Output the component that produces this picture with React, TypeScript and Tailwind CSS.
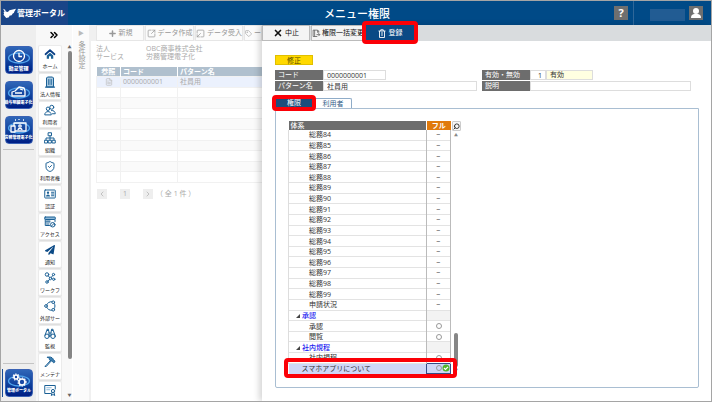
import type { ReactNode } from "react";
import {
  ChevronLeft,
  ChevronRight,
  ChevronsRight,
  FileText,
  Plus,
  Search,
  ShieldCheck,
  SquareArrowOutUpRight,
  SquareArrowOutDownLeft,
  Tag,
  X,
} from "lucide-react";
import { FaPaperPlane } from "react-icons/fa";

function Svg({ children }: { children: ReactNode }) {
  return (
    <svg viewBox="0 0 24 24" className="size-3" fill="none" stroke="currentColor" strokeWidth="2" strokeLinecap="round" strokeLinejoin="round">
      {children}
    </svg>
  );
}

const HomeIcon = (
  <Svg>
    <path d="M3 12.500 12 4.500l9 8" stroke="#0b3f86" strokeWidth="3.400" />
    <path d="M5.500 15 12 9.500l6.500 5.500V21.500H14v-5h-4v5H5.500z" fill="currentColor" stroke="none" />
  </Svg>
);

const BuildingIcon = (
  <Svg>
    <path d="M5 21V4l2-2h10l2 2v17z" fill="#a9c9e0" />
    <path d="M9 7v10M12 7v10M15 7v10" strokeWidth="1.400" />
    <path d="M3 22h18" strokeWidth="2.500" />
  </Svg>
);

const UsersIcon = (
  <Svg>
    <circle cx="15.500" cy="6.500" r="4" />
    <circle cx="8" cy="9.500" r="3.500" fill="white" />
    <path d="M1.500 21c0-8 13-8 13 0zM15 13c4-.500 7.500 2 7.500 6.500H17" />
  </Svg>
);

const OrgIcon = (
  <Svg>
    <rect x="9" y="1.500" width="6" height="6" />
    <rect x="1.500" y="16.500" width="5.500" height="5.500" />
    <rect x="9.200" y="16.500" width="5.500" height="5.500" />
    <rect x="17" y="16.500" width="5.500" height="5.500" />
    <path d="M12 8v8M4 16v-4h16v4" />
  </Svg>
);

const CardIcon = (
  <Svg>
    <rect x="1.500" y="4" width="21" height="16" rx="1" />
    <circle cx="8" cy="9.500" r="2.300" fill="currentColor" stroke="none" />
    <path d="M4 17c0-5.500 8-5.500 8 0z" fill="currentColor" stroke="none" />
    <path d="M15 8.500h4.500M15 12h4.500M15 15.500h4.500" />
  </Svg>
);

const AccessIcon = (
  <Svg>
    <rect x="1.500" y="2" width="21" height="5" rx="1" fill="#8db8d8" />
    <path d="M12 12H2.500V8M22 8v3M11 19H2.500v-6" />
    <path d="M5 10h7M5 16h5" />
    <circle cx="17.500" cy="17.500" r="4.500" />
    <path d="m14.500 20.500 6-6" />
  </Svg>
);

const WorkflowIcon = (
  <Svg>
    <circle cx="6" cy="5" r="3.500" />
    <circle cx="19" cy="5" r="2.300" />
    <circle cx="13" cy="13" r="2.500" />
    <circle cx="6" cy="20" r="2.500" />
    <circle cx="19.500" cy="14.500" r="2.300" />
    <path d="m8.500 7.500 2.500 3.500M14.500 11l3-4M11.500 15l-4 3" />
  </Svg>
);

const ExternalIcon = (
  <Svg>
    <circle cx="4" cy="12" r="2.700" />
    <circle cx="18.500" cy="4.500" r="2.700" />
    <circle cx="18.500" cy="19.500" r="2.700" />
    <path d="M5.500 9.500C7 5.500 11 3 15.800 3.500M5.500 14.500c1.500 4 5.500 6.500 10.300 6M20.500 7c2 3 2 7 0 10" />
  </Svg>
);

const BinocularsIcon = (
  <Svg>
    <circle cx="6" cy="16.500" r="4.500" />
    <circle cx="18" cy="16.500" r="4.500" />
    <path d="M2 14.500 5.500 5h4l1 11M22 14.500 18.500 5h-4l-1 11M6 5V2.500h3V5M15 5V2.500h3V5M10.500 10h3" />
  </Svg>
);

const HammerIcon = (
  <Svg>
    <path d="M7 2.500c5-1.500 9 0 11 3l.500 2 2.500 1.500 1 2.500-2.500 2-2.500-2-1.500-2-2 .500-2.500-2.500C11.500 5 10 3.500 7 2.500z" fill="#3f7fb0" />
    <path d="M13 9 2.500 20.500M14 10.500 4 21.500l-1.500-1" />
  </Svg>
);

const CertificateIcon = (
  <Svg>
    <path d="M13 19H1.500V3h21v7" />
    <path d="M5.500 7.500h9M5.500 11.500h6" stroke="#8db8d8" />
    <circle cx="18" cy="14" r="3.200" />
    <path d="m16 17-1.500 6 3.500-2 3.500 2-1.500-6" />
  </Svg>
);

const menu: { label: string; icon: ReactNode }[] = [
  { label: "ホーム", icon: HomeIcon },
  { label: "法人情報", icon: BuildingIcon },
  { label: "利用者", icon: UsersIcon },
  { label: "組織", icon: OrgIcon },
  { label: "利用者権", icon: <ShieldCheck className="size-[13px]" /> },
  { label: "認証", icon: CardIcon },
  { label: "アクセス", icon: AccessIcon },
  { label: "通知", icon: <FaPaperPlane className="size-[10px] text-[#0b4a86]" /> },
  { label: "ワークフ", icon: WorkflowIcon },
  { label: "外部サー", icon: ExternalIcon },
  { label: "監視", icon: BinocularsIcon },
  { label: "メンテナ", icon: HammerIcon },
  { label: "", icon: CertificateIcon },
];

function AppTile({ label, small, children }: { label: string; small?: boolean; children: ReactNode }) {
  return (
    <button className="flex size-7 shrink-0 flex-col items-center justify-end rounded-[4px] border border-[#3a62b4] bg-linear-to-b from-[#2f66b8] to-[#001d84] pb-[2px] text-white">
      <svg viewBox="0 0 26 16" className="h-4 w-[26px]" fill="none" stroke="white" strokeWidth="1.300" strokeLinejoin="round">
        <ellipse cx="13" cy="9" rx="10.500" ry="5" stroke="#4fa3ec" />
        {children}
      </svg>
      <span className={small ? "text-[4px] leading-[6px] font-black whitespace-nowrap" : "text-[5px] leading-[6px] font-black whitespace-nowrap"}>{label}</span>
    </button>
  );
}

function Cog({ cx, cy, r }: { cx: number; cy: number; r: number }) {
  return (
    <>
      <circle cx={cx} cy={cy} r={r + 1} strokeWidth="1.200" strokeDasharray="1.300 1.300" />
      <circle cx={cx} cy={cy} r={r} strokeWidth="1.600" fill="#1b4aa5" />
    </>
  );
}

type Row = { name: string; value?: string; group?: boolean };
const rows: Row[] = [
  ...Array.from({ length: 16 }, (_, i) => ({ name: `総務${84 + i}`, value: "−" })),
  { name: "申請状況", value: "−" },
  { name: "承認", group: true },
  { name: "承認", value: "○" },
  { name: "閲覧", value: "○" },
  { name: "社内規程", group: true },
  { name: "社内規程", value: "○" },
];

function Highlight({ className }: { className: string }) {
  return <span className={`pointer-events-none absolute z-20 rounded-[4px] border-4 border-[#fb0007] ${className}`} />;
}

function Mark({ value }: { value?: string }) {
  if (value === "○") return <span className="mx-auto block size-[6px] rounded-full border border-[#999]" />;
  return <span className="block text-center font-semibold text-[#555]">{value}</span>;
}

const labelCell = "bg-[#6d6d6d] pl-[3px] text-white w-12 shrink-0";
const field = "h-[10px] border border-[#ddd] bg-white px-[3px] text-[7px] leading-[8px] outline-none";
const dimButton = "flex items-center justify-center gap-[2px] border border-[#e6e6e6] bg-[#fbfbfb] whitespace-nowrap";

export default function App() {
  return (
    <div className="flex h-screen flex-col overflow-hidden border border-[#a5a5a5] bg-white font-['Open_Sans','Noto_Sans_CJK_JP',sans-serif] text-[7px] leading-[10px] text-[#333]">
      <header className="flex h-6 shrink-0 items-stretch bg-[#004a87] text-white">
        <div className="flex w-[67px] items-center gap-px bg-[#1a4588] pl-[2px] text-[8px] font-bold whitespace-nowrap">
          <svg viewBox="0 0 24 18" className="h-[10px] w-[13px]" fill="white">
            <path d="M0 1 4 3l1 3 4 1 3-3 12-3-2 4-1 1-1 3-2 1-2 3-4 1-1 3-5 1-2-2-3-4 1-2-1-3 2-1z" />
          </svg>
          管理ポータル
        </div>
        <h1 className="flex-1 pl-[168px] text-center text-[11px] leading-[25px] font-medium">メニュー権限</h1>
        <div className="flex w-[233px] items-center justify-end">
          <button aria-label="ヘルプ" className="size-[14px] bg-[#6f6f6f] text-[11px] leading-[14px] font-bold">?</button>
          <span className="ml-[5px] w-px self-stretch bg-[#2f6799]" />
          <span className="mt-1 ml-4 h-3 w-[35px] bg-[#225c93]" />
          <button aria-label="ユーザー" className="mr-2 ml-1 size-[14px] bg-[#6f6f6f]">
            <svg viewBox="0 0 14 14" className="size-[14px]" fill="white">
              <circle cx="7" cy="5" r="3" />
              <path d="M2 12c0-3 1.500-4 3.500-4h3c2 0 3.500 1 3.500 4z" />
            </svg>
          </button>
        </div>
      </header>

      <div className="flex min-h-0 flex-1">
        <nav aria-label="サービス" className="flex w-[35px] shrink-0 flex-col items-center gap-[7px] bg-[#eeeeee] pt-[21px] pb-1">
          <AppTile label="勤怠管理">
            <circle cx="13" cy="7" r="5.500" />
            <path d="M13 4v3.500h3" />
          </AppTile>
          <AppTile label="給与明細電子化" small>
            <path d="M6 12V8l3-1 4-4 5 1 1 3v5zM9 9h7M14 5l3 1" />
          </AppTile>
          <AppTile label="労務管理電子化" small>
            <rect x="8" y="4" width="12" height="8" />
            <rect x="5" y="7" width="4" height="6" fill="#1b4aa5" />
            <circle cx="14" cy="7" r="1.200" />
            <path d="M12 11c0-2 4-2 4 0M9 1h1M13 0v1M17 1h1" />
          </AppTile>
          <hr className="-mt-[2px] w-[31px] border-[#c4c4c4]" />
          <hr className="mt-auto w-[31px] border-[#c4c4c4]" />
          <div className="-mt-[2px] flex w-full gap-[2px] pl-px">
            <span className="w-px bg-[#164a94]" />
            <AppTile label="管理ポータル" small>
              <Cog cx={10} cy={5} r={2} />
              <Cog cx={16} cy={10} r={3} />
            </AppTile>
          </div>
        </nav>

        <nav aria-label="メニュー" className="flex w-9 shrink-0 flex-col bg-[#f8f8f8]">
          <button aria-label="メニューを開く" className="flex h-5 shrink-0 items-center justify-center text-black">
            <ChevronsRight className="size-3" strokeWidth={3} />
          </button>
          <div className="flex min-h-0 flex-1 justify-between pl-[2px]">
            <ul className="flex flex-col gap-px overflow-hidden">
              {menu.map((m, i) => (
                <li key={i}>
                  <button aria-label={m.label || "証明書"} className="flex h-[27px] w-6 flex-col items-center rounded-[2px] border border-[#ebebeb] bg-white pt-[2px] text-[#1b6095] shadow-sm">
                    <span className="flex size-3 items-center justify-center">{m.icon}</span>
                    <span className="mt-[2px] text-[5px] leading-[8px] whitespace-nowrap text-[#222]">{m.label}</span>
                  </button>
                </li>
              ))}
            </ul>
            <div className="flex w-[5px] flex-col items-center pb-[2px] text-[4px] leading-[6px] text-[#666]">
              <span>▲</span>
              <span className="w-1 flex-1 rounded-full bg-[#858585]" />
              <span className="mt-[34px]">▼</span>
            </div>
          </div>
        </nav>

        <aside className="ml-px flex w-[18px] shrink-0 flex-col items-center border-r-2 border-[#f0f0f0] bg-[#fbfbfb] pt-1 text-[#999]">
          <span className="text-[6px] leading-[9px] text-[#bbb]">▶</span>
          <span className="mt-[3px] [writing-mode:vertical-rl]">条件設定</span>
        </aside>

        <main className="w-[171px] shrink-0 overflow-hidden bg-white text-[#aaa]">
          <div className="flex h-4 gap-px bg-[#f0f0f0] pl-[5px] text-[#999]">
            <button className={`${dimButton} w-12`}><Plus className="size-[9px]" strokeWidth={4} />新規</button>
            <button className={`${dimButton} w-[49px]`}><SquareArrowOutUpRight className="size-[9px] shrink-0" />データ作成</button>
            <button className={`${dimButton} w-12`}><SquareArrowOutDownLeft className="size-[9px] shrink-0" />データ受入</button>
            <button className={`${dimButton} flex-1`}><Tag className="size-[7px] shrink-0" />ー</button>
          </div>
          <dl className="mt-1 grid grid-cols-[50px_1fr] pl-[5px] leading-[8px]">
            <dt>法人</dt><dd>OBC商事株式会社</dd>
            <dt>サービス</dt><dd>労務管理電子化</dd>
          </dl>
          <table className="mt-[6px] ml-[5px] h-[116px] w-[200px] table-fixed border-collapse text-left">
            <colgroup><col className="w-6" /><col className="w-[57px]" /><col /></colgroup>
            <thead>
              <tr className="bg-[#b0c0ce] leading-[9px] text-white">
                <th className="p-0 text-center font-bold">参照</th>
                <th className="border-l border-white p-0 pl-[2px] font-bold">コード</th>
                <th className="border-l border-white p-0 pl-[2px] font-bold">パターン名</th>
              </tr>
            </thead>
            <tbody>
              {Array.from({ length: 10 }, (_, i) => (
                <tr key={i} className={i === 0 ? "bg-[#ebf1fd] leading-[9px]" : i % 2 ? "leading-[9px]" : "bg-[#fafafa] leading-[9px]"}>
                  <td className="border border-[#f1f1f1] p-0">{i === 0 && <FileText className="mx-auto size-2 text-[#bbb]" />}</td>
                  <td className="border border-[#f1f1f1] p-0 pl-[2px]">{i === 0 ? "0000000001" : "\u00a0"}</td>
                  <td className="border border-[#f1f1f1] p-0 pl-[2px]">{i === 0 && "社員用"}</td>
                </tr>
              ))}
            </tbody>
          </table>
          <div className="mt-[6px] flex items-center gap-[13px] pl-[6px] text-[#aaa]">
            <button aria-label="前へ" className="flex size-[10px] items-center justify-center bg-[#eeeeee]"><ChevronLeft className="size-2" /></button>
            <button className="size-[10px] bg-[#eeeeee] leading-[10px]">1</button>
            <button aria-label="次へ" className="flex size-[10px] items-center justify-center bg-[#eeeeee]"><ChevronRight className="size-2" /></button>
            <span className="-ml-[10px] whitespace-pre">（ 全 1 件 ）</span>
          </div>
        </main>

        <section className="z-10 flex min-w-0 flex-1 flex-col bg-white shadow-[-3px_0_6px_rgba(0,0,0,0.16)]">
          <div className="flex h-4 shrink-0 gap-px bg-[#d9dcde] text-[#111]">
            <button className="flex w-12 items-center justify-center gap-[2px] border border-[#bbb] bg-[#f4f4f4]"><X className="size-[10px]" strokeWidth={4} />中止</button>
            <button className="flex w-[54px] items-center gap-px border border-[#bbb] bg-[#f4f4f4] whitespace-nowrap">
              <svg viewBox="0 0 24 24" className="size-[9px] shrink-0" fill="none" stroke="#555" strokeWidth="2">
                <path d="M14 20H3V3h12v7M7 3v17M15 5h3v5M12 15h9m-4-4 4 4-4 4" />
              </svg>
              権限一括変更
            </button>
            <div className="relative flex">
              <button className="flex w-12 items-center justify-center gap-[3px] bg-[#0a4a85] text-white">
                <svg viewBox="0 0 16 18" className="h-[9px] w-2" fill="none" stroke="white" strokeWidth="1.800">
                  <path d="M1 4h14M3 4v13h10V4M5.500 4V1.500h5V4M6 8h4M6 12h4" />
                </svg>
                登録
              </button>
              <Highlight className="-inset-x-1 -top-1 -bottom-[3px]" />
            </div>
          </div>

          <div className="flex min-h-0 flex-1 flex-col pr-3 pb-[13px] pl-[13px]">
            <span className="mt-[14px] h-[10px] w-[38px] shrink-0 border border-[#e0bf00] bg-[#ffd900] text-center leading-[9px] text-[#554800]">修正</span>
            <form className="mt-[5px] flex shrink-0 gap-[5px]">
              <div className="flex w-[202px] flex-col gap-px">
                <div className="flex">
                  <label htmlFor="code" className={labelCell}>コード</label>
                  <input id="code" defaultValue="0000000001" className={`${field} w-[63px]`} />
                </div>
                <div className="flex">
                  <label htmlFor="pattern" className={labelCell}>パターン名</label>
                  <input id="pattern" defaultValue="社員用" className={`${field} min-w-0 flex-1`} />
                </div>
              </div>
              <div className="mr-2 flex min-w-0 flex-1 flex-col gap-px">
                <div className="flex">
                  <label htmlFor="valid" className={labelCell}>有効・無効</label>
                  <input id="valid" defaultValue="1" className={`${field} w-4 text-right`} />
                  <output htmlFor="valid" className="h-[10px] w-[47px] border border-[#ddd] bg-[#ffffe1] pl-[3px] leading-[8px]">有効</output>
                </div>
                <div className="flex">
                  <label htmlFor="note" className={labelCell}>説明</label>
                  <input id="note" className={`${field} min-w-0 flex-1`} />
                </div>
              </div>
            </form>

            <div role="tablist" className="mt-[7px] flex shrink-0 gap-px">
              <div className="relative flex">
                <button role="tab" aria-selected="true" className="h-[10px] w-[38px] bg-[#1d4d7c] leading-[10px] text-white">権限</button>
                <Highlight className="-inset-[3px]" />
              </div>
              <button role="tab" aria-selected="false" className="h-[10px] w-[38px] rounded-t-[2px] border border-b-0 border-[#8facc8] leading-[9px] text-[#2f5d88]">利用者</button>
            </div>

            <div role="tabpanel" className="flex flex-1 items-start rounded-b-[2px] border border-[#a9bed2] pt-3 pl-3">
              <div className="relative">
                <table className="h-[253px] w-[163px] table-fixed border-collapse text-left leading-[9px]">
                  <colgroup><col /><col className="w-6" /></colgroup>
                  <thead>
                    <tr className="text-white">
                      <th className="bg-[#6d6d6d] p-0 pl-[2px] font-medium">体系</th>
                      <th className="border-l border-white bg-[#e07a0c] p-0 text-center font-bold">フル</th>
                    </tr>
                  </thead>
                  <tbody>
                    {rows.map((r, i) => (
                      <tr key={i} className="border-b border-[#e3e3e3]">
                        <td className={r.group ? "border-l border-[#ddd] p-0 pl-[7px] font-medium text-[#1a1af0]" : "border-l border-[#ddd] p-0 pl-5"}>
                          {r.group && (
                            <svg viewBox="0 0 4 4" className="mr-[2px] inline-block size-1" fill="#444"><path d="M4 0v4H0z" /></svg>
                          )}
                          {r.name}
                        </td>
                        <td className={r.group ? "border-x border-[#bbb] bg-[#f3f3f3] p-0" : "border-x border-[#bbb] p-0"}>
                          <Mark value={r.value} />
                        </td>
                      </tr>
                    ))}
                    <tr className="bg-[#cfd7f7]">
                      <td className="p-0 pl-[13px]">スマホアプリについて</td>
                      <td className="border border-[#344c86] p-0">
                        <span className="flex items-center justify-end">
                          <span className="size-[6px] rounded-full border border-[#999]" />
                          <svg viewBox="0 0 8 8" className="size-2"><circle cx="4" cy="4" r="3.500" fill="#52b52a" /><path d="m2 4 1.500 1.500L6 2.800" fill="none" stroke="white" strokeWidth="1.200" /></svg>
                        </span>
                      </td>
                    </tr>
                  </tbody>
                </table>
                <Highlight className="-right-[6px] -bottom-1 -left-1 h-5" />
              </div>
              <div className="flex h-[253px] w-[10px] flex-col items-center text-[4px] leading-[6px] text-[#888]">
                <button aria-label="検索" className="flex h-[10px] w-[9px] items-center justify-center rounded-[1px] border border-[#ccc] bg-[#f6f6f6] text-[#222]"><Search className="size-[7px] -scale-x-100" strokeWidth={3} /></button>
                <span className="mt-[2px]">▲</span>
                <span className="mt-auto h-[34px] w-1 rounded-full bg-[#868686]" />
                <span className="mt-px">▼</span>
              </div>
            </div>
          </div>
        </section>
      </div>
    </div>
  );
}
